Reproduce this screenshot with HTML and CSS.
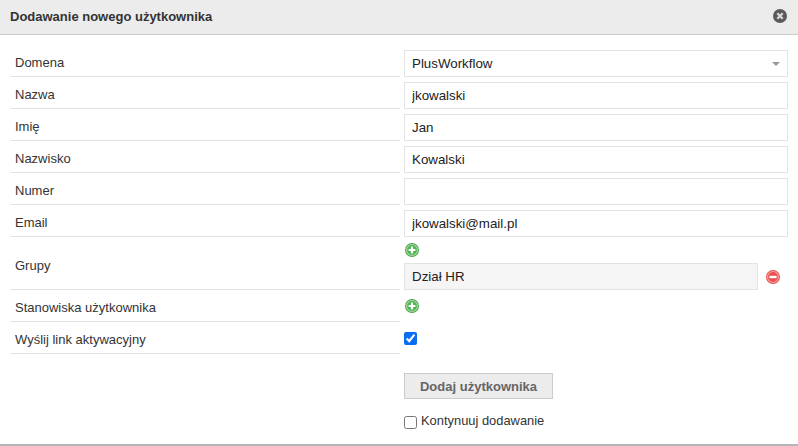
FILE: index.html
```html
<!DOCTYPE html>
<html lang="pl">
<head>
<meta charset="utf-8">
<title>Dodawanie nowego użytkownika</title>
<link rel="stylesheet" href="styles.css">
</head>
<body>
<div class="dialog">
  <header class="head">
    <h1 class="title">Dodawanie nowego użytkownika</h1>
    <svg class="close" width="14" height="14" viewBox="0 0 14 14"><circle cx="7" cy="7" r="7" fill="#5a5a5a"/><path d="M4.3 4.3l5.4 5.4M9.7 4.3l-5.4 5.4" stroke="#dcdcdc" stroke-width="2.2"/></svg>
  </header>
  <form class="form">
    <div class="row"><div class="label">Domena</div><div class="field"><div class="select"><span>PlusWorkflow</span><i class="caret"></i></div></div></div>
    <div class="row"><div class="label">Nazwa</div><div class="field"><input class="input" value="jkowalski"></div></div>
    <div class="row"><div class="label">Imię</div><div class="field"><input class="input" value="Jan"></div></div>
    <div class="row"><div class="label">Nazwisko</div><div class="field"><input class="input" value="Kowalski"></div></div>
    <div class="row"><div class="label">Numer</div><div class="field"><input class="input" value=""></div></div>
    <div class="row"><div class="label">Email</div><div class="field"><input class="input" value="jkowalski@mail.pl"></div></div>
    <div class="row row-groups"><div class="label label-groups">Grupy</div><div class="field field-groups">
      <svg class="icon icon-add" width="14" height="14" viewBox="0 0 14 14"><circle cx="7" cy="7" r="7" fill="#4f9f4f"/><circle cx="7" cy="7" r="5.5" fill="#4fb54f" stroke="#a5dca5" stroke-width="1.2"/><path d="M7 3.6v6.8M3.6 7h6.8" stroke="#fff" stroke-width="2.2"/></svg>
      <div class="group-line"><div class="chip">Dział HR</div>
      <svg class="icon" width="14" height="14" viewBox="0 0 14 14"><circle cx="7" cy="7" r="7" fill="#e24f4f"/><circle cx="7" cy="7" r="5.5" fill="#ec5050" stroke="#f8a0a0" stroke-width="1.2"/><path d="M3.4 7h7.2" stroke="#fff" stroke-width="2.4"/></svg></div>
    </div></div>
    <div class="row"><div class="label">Stanowiska użytkownika</div><div class="field field-icon">
      <svg class="icon icon-add" width="14" height="14" viewBox="0 0 14 14"><circle cx="7" cy="7" r="7" fill="#4f9f4f"/><circle cx="7" cy="7" r="5.5" fill="#4fb54f" stroke="#a5dca5" stroke-width="1.2"/><path d="M7 3.6v6.8M3.6 7h6.8" stroke="#fff" stroke-width="2.2"/></svg>
    </div></div>
    <div class="row"><div class="label">Wyślij link aktywacyjny</div><div class="field field-check"><input class="check" type="checkbox" checked></div></div>
    <div class="actions">
      <button class="submit" type="button">Dodaj użytkownika</button>
      <label class="continue"><input class="check" type="checkbox"><span>Kontynuuj dodawanie</span></label>
    </div>
  </form>
</div>
</body>
</html>
```
FILE: styles.css
```css
* { box-sizing: border-box; }
html, body { margin: 0; padding: 0; }
body {
  width: 798px;
  height: 446px;
  overflow: hidden;
  background: #fff;
  font-family: "Liberation Sans", Arial, sans-serif;
  font-size: 13px;
  color: #333;
}
.dialog {
  height: 446px;
  display: flex;
  flex-direction: column;
  border-bottom: 2px solid #b5b5b5;
}
.head {
  height: 35px;
  flex: none;
  display: flex;
  align-items: center;
  justify-content: space-between;
  padding: 0 11px 2px 10px;
  background: #ececec;
  border-bottom: 1px solid #ccc;
}
.title { margin: 0; font-size: 13px; font-weight: bold; color: #333; }
.form { padding: 10px 10px 0; display: flex; flex-direction: column; }
.row { display: grid; grid-template-columns: 390px 384px; column-gap: 4px; height: 32px; }
.row-groups { height: 53px; }
.label {
  display: flex;
  align-items: center;
  padding: 3px 5px 0;
  border-bottom: 1px solid #e3e3e3;
  line-height: 15px;
}
.label-groups { padding-top: 4px; }
.field { padding-top: 5px; }
.input, .select {
  display: flex;
  align-items: center;
  justify-content: space-between;
  width: 384px;
  height: 27px;
  margin: 0;
  padding: 0 7px;
  border: 1px solid #e3e3e3;
  border-radius: 0;
  outline: 0;
  background: #fff;
  font: 13.33px "Liberation Sans", Arial, sans-serif;
  color: #222;
}
.caret {
  width: 0;
  height: 0;
  border-left: 4px solid transparent;
  border-right: 4px solid transparent;
  border-top: 4px solid #999;
}
.icon { display: block; flex: none; }
.icon-add { margin-left: 1px; }
.field-groups { padding-top: 6px; display: flex; flex-direction: column; gap: 6px; }
.group-line { display: flex; align-items: center; gap: 8px; }
.chip {
  width: 354px;
  height: 27px;
  display: flex;
  align-items: center;
  padding: 0 7px;
  background: #f5f5f5;
  border: 1px solid #e3e3e3;
  font-size: 13.33px;
  color: #222;
}
.field-icon { padding-top: 9px; }
.field-check { padding-top: 10px; }
.check { display: block; width: 13px; height: 13px; margin: 0; accent-color: #0b6cf0; }
.actions { margin: 19px 0 0 394px; display: flex; flex-direction: column; align-items: flex-start; gap: 16px; }
.submit {
  width: 149px;
  height: 26px;
  padding: 0;
  background: #ececec;
  border: 1px solid #ccc;
  border-radius: 0;
  font: bold 13px "Liberation Sans", Arial, sans-serif;
  color: #666;
}
.continue { display: flex; align-items: center; gap: 4px; font-size: 12.9px; line-height: 14px; }
.continue span { position: relative; top: -1px; }
```
